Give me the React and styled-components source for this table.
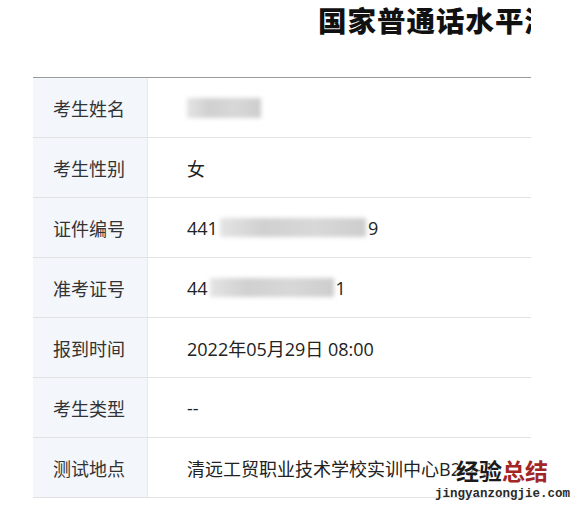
import React from 'react'
import styled, { createGlobalStyle } from 'styled-components'

const rows = [
  { label: '考生姓名', value: <Blur w={74} h={20} /> },
  { label: '考生性别', value: '女' },
  { label: '证件编号', value: <>441<Blur w={146} h={19} gap={2} />9</> },
  { label: '准考证号', value: <>44<Blur w={124} h={19} gap={2} />1</> },
  { label: '报到时间', value: '2022年05月29日 08:00' },
  { label: '考生类型', value: '--' },
  { label: '测试地点', value: '清远工贸职业技术学校实训中心B2-2-3' },
]

export default function App() {
  return (
    <>
      <Global />
      <Page>
        <Header>
          <Title>国家普通话水平测试报名信息</Title>
        </Header>
        <Table>
          {rows.map((r) => (
            <Row key={r.label}>
              <Label>{r.label}</Label>
              <Value>{r.value}</Value>
            </Row>
          ))}
        </Table>
      </Page>
      <Watermark>
        <Mark>经验<Red>总结</Red></Mark>
        <Site>jingyanzongjie.com</Site>
      </Watermark>
    </>
  )
}

function Blur({ w, h, gap = 0 }) {
  return <BlurBox $w={w} $h={h} $gap={gap} />
}

const Global = createGlobalStyle`
  body {
    margin: 0;
    background: #fff;
    font-family: "Noto Sans CJK SC", "Noto Sans", sans-serif;
  }
`;

const Page = styled.div`
  width: 498px;
  margin-left: 33px;
  overflow: hidden;
`;

const Header = styled.div`
  height: 77px;
  padding-left: 285px;
  box-sizing: border-box;
`;

const Title = styled.h1`
  margin: 0;
  padding-top: 2px;
  font-size: 28.5px;
  line-height: 36px;
  letter-spacing: 1px;
  font-weight: 900;
  color: #111;
  white-space: nowrap;
`;

const Table = styled.div`
  border-top: 1px solid #9a9a9a;
`;

const Row = styled.div`
  display: grid;
  grid-template-columns: 115px 1fr;
  height: 60px;
  border-bottom: 1px solid #e2e2e2;
  box-sizing: border-box;
`;

const Label = styled.div`
  display: flex;
  align-items: center;
  justify-content: center;
  background: #f3f6fb;
  border-right: 1px solid #e6e9ef;
  font-size: 18px;
  color: #333;
  padding-right: 2px;
`;

const Value = styled.div`
  display: flex;
  align-items: center;
  padding-left: 39px;
  font-family: "Open Sans", "Noto Sans CJK SC", sans-serif;
  font-size: 18px;
  color: #222;
  white-space: nowrap;
`;

const BlurBox = styled.span`
  display: inline-block;
  width: ${(p) => p.$w}px;
  height: ${(p) => p.$h}px;
  margin: 0 ${(p) => p.$gap}px;
  background: linear-gradient(90deg, #e4e4e4 0%, #d0d0d0 30%, #d8d8d8 65%, #cdcdcd 100%);
  filter: blur(2px);
`;

const Watermark = styled.div`
  position: absolute;
  left: 430px;
  top: 456px;
  display: flex;
  flex-direction: column;
  align-items: flex-end;
  width: 140px;
`;

const Mark = styled.div`
  font-size: 23px;
  line-height: 28px;
  font-weight: 700;
  color: #1a1a1a;
  padding-right: 22px;
  text-shadow: 0 0 2px #fff, 0 0 2px #fff;
`;

const Red = styled.span`
  color: #a32626;
`;

const Site = styled.div`
  font-family: "Liberation Mono", monospace;
  font-size: 12.5px;
  line-height: 16px;
  font-weight: 700;
  color: #2a2a2a;
  margin-top: 2px;
`;
